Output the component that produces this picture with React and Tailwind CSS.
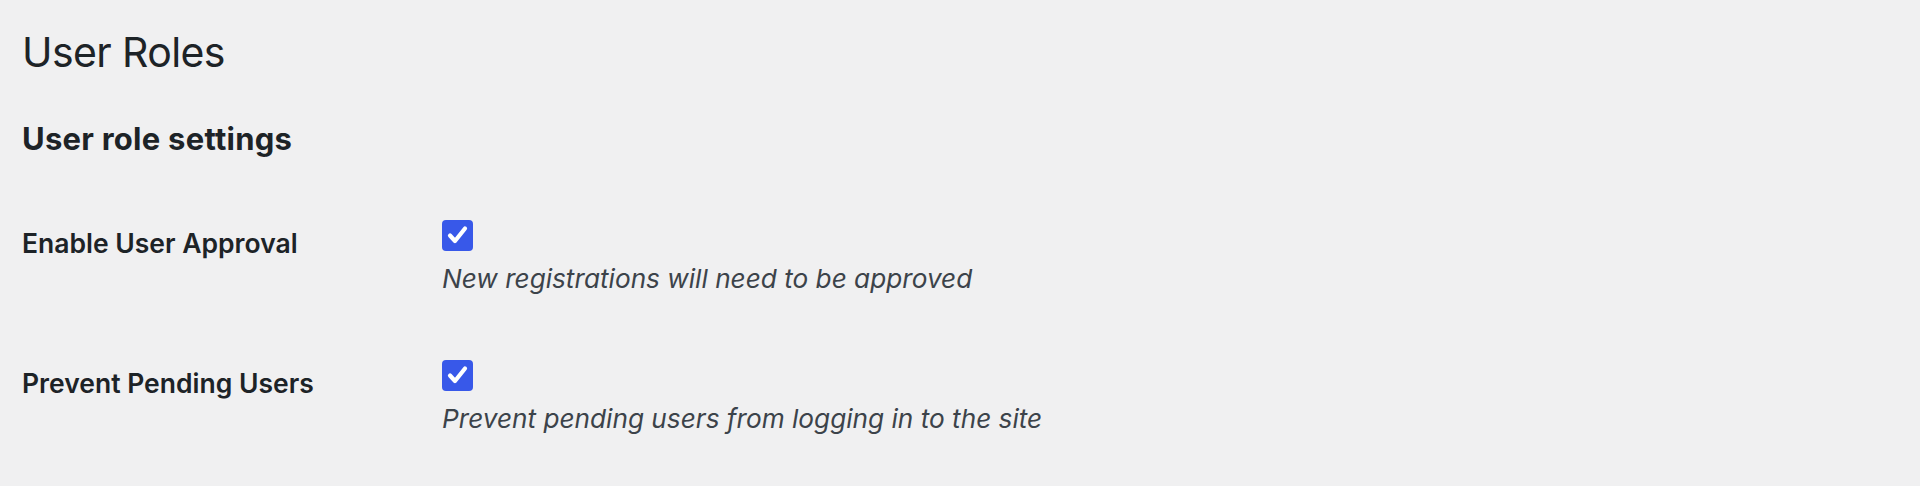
import { useState } from "react"

const settings = [
  {
    id: "enable-user-approval",
    label: "Enable User Approval",
    description: "New registrations will need to be approved",
  },
  {
    id: "prevent-pending-users",
    label: "Prevent Pending Users",
    description: "Prevent pending users from logging in to the site",
  },
]

const Checkbox = ({ checked, onChange, id }) => (
  <button
    id={id}
    type="button"
    role="checkbox"
    aria-checked={checked}
    onClick={onChange}
    className={`w-[31px] h-[31px] rounded-[4px] flex items-center justify-center ${checked ? "bg-[#3858e9]" : "bg-white border-2 border-[#8c8f94]"}`}
  >
    {checked && (
      <svg width="31" height="31" viewBox="0 0 31 31" fill="none">
        <path d="M8 15.5l5 5.5 10-12.5" stroke="white" strokeWidth="4.2" strokeLinecap="round" strokeLinejoin="round" />
      </svg>
    )}
  </button>
)

export default function App() {
  const [values, setValues] = useState({ "enable-user-approval": true, "prevent-pending-users": true })

  return (
    <div className="min-h-[486px] bg-[#f0f0f1] text-[#1d2327] pl-[22px] pt-[32px] font-['Inter',sans-serif]">
      <h1 className="text-[41px] leading-[41px] font-normal tracking-[-0.6px]">User Roles</h1>
      <h2 className="mt-[51px] text-[31px] leading-[30px] font-bold tracking-[0.25px]">User role settings</h2>
      <div className="mt-[66px] flex flex-col gap-[68px]">
        {settings.map((s) => (
          <div key={s.id} className="flex">
            <label htmlFor={s.id} className="w-[420px] pt-[10px] text-[26.5px] leading-[27px] font-semibold">
              {s.label}
            </label>
            <div className="flex flex-col items-start">
              <Checkbox
                id={s.id}
                checked={values[s.id]}
                onChange={() => setValues({ ...values, [s.id]: !values[s.id] })}
              />
              <p className="mt-[15px] text-[26.2px] leading-[26px] italic text-[#3c434a]">{s.description}</p>
            </div>
          </div>
        ))}
      </div>
    </div>
  )
}
